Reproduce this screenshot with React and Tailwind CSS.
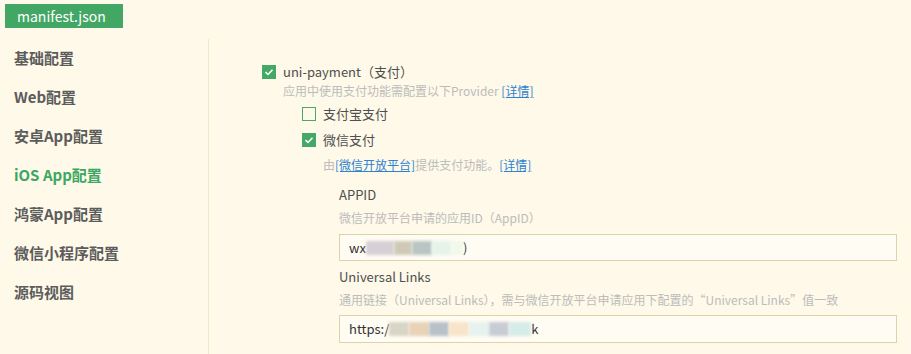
import React from "react";

const font = { fontFamily: '"Noto Sans CJK SC", "Noto Sans", sans-serif' };

const navItems = [
  "基础配置",
  "Web配置",
  "安卓App配置",
  "iOS App配置",
  "鸿蒙App配置",
  "微信小程序配置",
  "源码视图",
];

function Check({ checked }) {
  if (!checked) {
    return <span className="box-border block h-[14px] w-[14px] flex-none border border-[#4aa96a]" />;
  }
  return (
    <span className="flex h-[14px] w-[14px] flex-none items-center justify-center bg-[#45a866]">
      <svg viewBox="0 0 14 14" className="h-[14px] w-[14px]">
        <path d="M3.5 7.2 L6 9.5 L10.5 4.8" fill="none" stroke="#ffffff" strokeWidth="1.6" />
      </svg>
    </span>
  );
}

function Blur({ w, c }) {
  return <span className={`inline-block h-[14px] blur-[1.5px] ${w} ${c}`} />;
}

export default function App() {
  return (
    <div className="flex h-[354px] w-[911px] flex-col overflow-hidden bg-[#fef9e8]" style={font}>
      <div className="h-[39px] flex-none pl-[5px] pt-[4px]">
        <div className="flex h-[24px] w-[118px] items-center bg-[#42a764] pl-[12px] text-[14px] text-white">
          manifest.json
        </div>
      </div>
      <div className="flex flex-1">
        <nav className="w-[209px] flex-none border-r border-[#f2e8cc]">
          {navItems.map((item) => (
            <div
              key={item}
              className={`flex h-[39px] items-center pl-[14px] text-[15px] font-bold ${
                item === "iOS App配置" ? "text-[#3ba763]" : "text-[#5c5c5c]"
              }`}
            >
              {item}
            </div>
          ))}
        </nav>
        <main className="flex-1 pl-[53px] pt-[23px] text-[13px] text-[#4f4f4f]">
          <div className="flex h-5 items-center gap-[7px]">
            <Check checked />
            <span>uni-payment（支付）</span>
          </div>
          <div className="flex h-[18px] items-center pl-[21px] text-[12px] text-[#bcbcbc]">
            应用中使用支付功能需配置以下Provider&nbsp;
            <a className="text-[#2d82d2] underline">[详情]</a>
          </div>
          <div className="mt-[4px] pl-[40px]">
            <div className="flex h-5 items-center gap-[7px]">
              <Check checked={false} />
              <span>支付宝支付</span>
            </div>
            <div className="mt-[6px] flex h-5 items-center gap-[7px]">
              <Check checked />
              <span>微信支付</span>
            </div>
            <div className="mt-[6px] flex h-[18px] items-center pl-[21px] text-[12px] text-[#bcbcbc]">
              由<a className="text-[#2d82d2] underline">[微信开放平台]</a>提供支付功能。
              <a className="text-[#2d82d2] underline">[详情]</a>
            </div>
          </div>
          <div className="pl-[77px]">
            <div className="mt-[11px] flex h-5 items-center">APPID</div>
            <div className="mt-[4px] flex h-[18px] items-center text-[12px] text-[#bcbcbc]">
              微信开放平台申请的应用ID（AppID）
            </div>
            <div className="mt-[7px] flex h-[27px] w-[558px] items-center border border-[#ddd3a8] bg-[#fffcf3] pl-[9px] text-[13px] text-[#333333]">
              wx
              <Blur w="w-[28px]" c="bg-[#d6cfd6]" />
              <Blur w="w-[18px]" c="bg-[#cfcab8]" />
              <Blur w="w-[20px]" c="bg-[#b9c5c3]" />
              <Blur w="w-[20px]" c="bg-[#e6f4e8]" />
              <Blur w="w-[11px]" c="bg-[#f2f8ec]" />
              )
            </div>
            <div className="mt-[6px] flex h-5 items-center">Universal Links</div>
            <div className="mt-[4px] flex h-[18px] items-center text-[12px] text-[#bcbcbc]">
              通用链接（Universal Links），需与微信开放平台申请应用下配置的“Universal Links”值一致
            </div>
            <div className="mt-[6px] flex h-[28px] w-[558px] items-center border border-[#ddd3a8] bg-[#fffcf3] pl-[9px] text-[13px] text-[#333333]">
              https:/
              <Blur w="w-[20px]" c="bg-[#d8d4c6]" />
              <Blur w="w-[20px]" c="bg-[#e8d2b8]" />
              <Blur w="w-[20px]" c="bg-[#b8c0c8]" />
              <Blur w="w-[20px]" c="bg-[#f8e4c8]" />
              <Blur w="w-[20px]" c="bg-[#e6f2ee]" />
              <Blur w="w-[20px]" c="bg-[#c8ccd4]" />
              <Blur w="w-[22px]" c="bg-[#d6ece8]" />
              k
            </div>
          </div>
        </main>
      </div>
    </div>
  );
}
